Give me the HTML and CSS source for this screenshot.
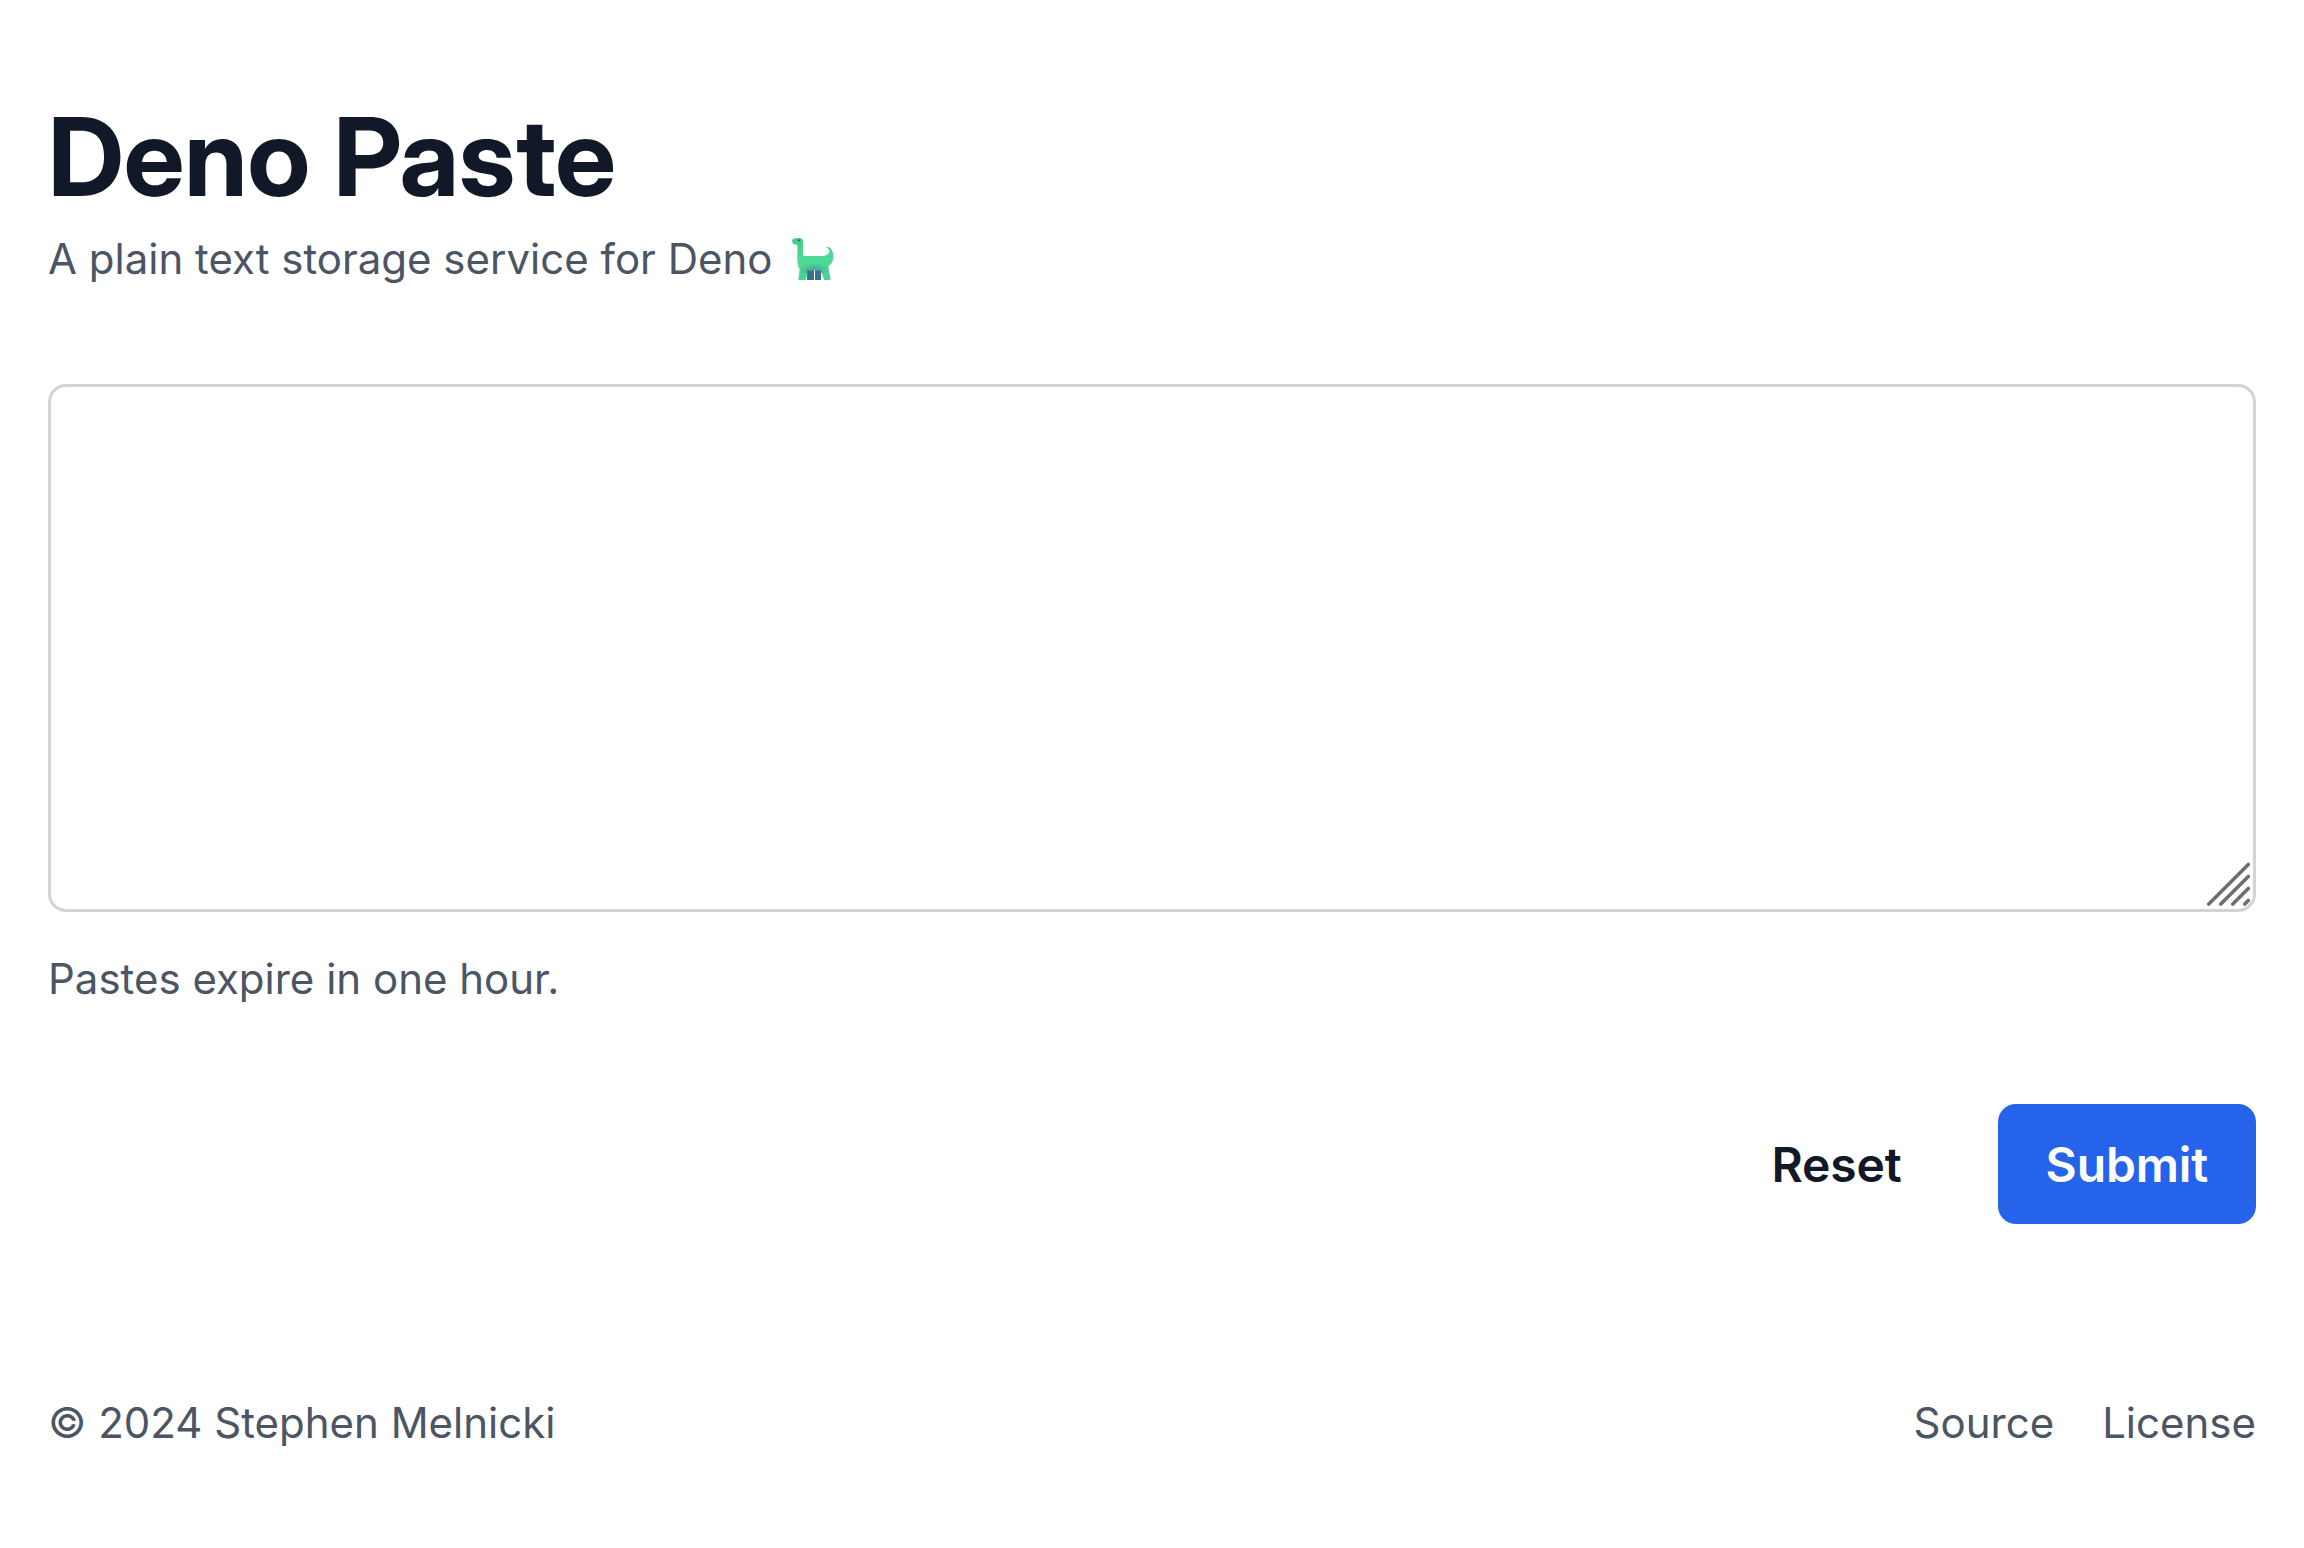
FILE: index.html
```html
<!DOCTYPE html>
<html lang="en">
<head>
<meta charset="utf-8">
<title>Deno Paste</title>
<link rel="stylesheet" href="styles.css">
</head>
<body>
<div class="page">
  <header class="header">
    <h1 class="title">Deno Paste</h1>
    <p class="text subtitle">A plain text storage service for Deno
      <svg class="dino" viewBox="18 18 162 162" aria-hidden="true">
        <defs>
          <linearGradient id="body" x1="0" y1="38" x2="0" y2="165" gradientUnits="userSpaceOnUse">
            <stop offset="0" stop-color="#42cd88"/>
            <stop offset=".5" stop-color="#4fdb95"/>
            <stop offset="1" stop-color="#4ad393"/>
          </linearGradient>
          <radialGradient id="belly" cx="0" cy="0" r="1" gradientTransform="translate(103 142) scale(50 32)" gradientUnits="userSpaceOnUse">
            <stop offset="0" stop-color="#4390a0" stop-opacity=".9"/>
            <stop offset=".4" stop-color="#439ba0" stop-opacity=".6"/>
            <stop offset="1" stop-color="#48c090" stop-opacity="0"/>
          </radialGradient>
        </defs>
        <path fill="url(#body)" d="M36 47C37 40 46 38 57 39C65 39 69 44 69 51V93H128C142 92 149 85 148 78C147 71 143 68 138 68C141 64 151 67 156 76C165 93 160 115 145 124L152 165H132L122 136H86L77 165H55L59 133C54 125 52 115 52 102V59C43 60 36 55 36 47Z"/>
        <path fill="url(#belly)" d="M60 93H145V124L148 145H125L122 136H86L83 145H58Z"/>
        <path fill="#3b7186" d="M82 136h20v29H81zM105 136h18v29h-18z"/>
        <ellipse cx="57" cy="46" rx="4" ry="2.8" fill="#315e50"/>
      </svg>
    </p>
  </header>
  <form class="form">
    <div class="field">
      <textarea class="input" aria-label="Paste"></textarea>
      <svg class="grip" viewBox="0 0 44 44" aria-hidden="true">
        <path d="M2.8 42 42.3 2.5M14.8 42 42.3 14.5M26.8 42 42.3 26.5M38.8 42 42.3 38.5"/>
      </svg>
    </div>
    <p class="text hint">Pastes expire in one hour.</p>
    <div class="actions">
      <button class="button" type="reset">Reset</button>
      <button class="button primary" type="button">Submit</button>
    </div>
  </form>
  <footer class="text footer">
    <span>© 2024 Stephen Melnicki</span>
    <nav class="links"><a class="link" href="#">Source</a><a class="link" href="#">License</a></nav>
  </footer>
</div>
</body>
</html>
```
FILE: styles.css
```css
* { box-sizing: border-box; }
body { margin: 0; background: #fff; color: #111827; font-family: Inter, sans-serif; }
.page { padding: 96px 48px; }
.title { margin: 0; font-family: "Inter Display", Inter, sans-serif; font-size: 108px; line-height: 122px; font-weight: 700; }
.text { margin: 0; font-size: 42px; line-height: 62px; color: #4b5563; }
.subtitle { margin-top: 10px; display: flex; align-items: center; gap: 14px; }
.dino { width: 54px; height: 54px; margin-bottom: 2px; }
.form { margin-top: 94px; }
.field { position: relative; height: 528px; }
.input {
  display: block; width: 100%; height: 100%; padding: 24px 36px;
  border: 3px solid #d1d5db; border-radius: 18px; background: #fff;
  font: 48px/72px Inter, sans-serif; resize: none; outline: none;
}
.grip { position: absolute; right: 6px; bottom: 6px; width: 44px; height: 44px; }
.grip path { fill: none; stroke: #6e6e6e; stroke-width: 3.6; stroke-linecap: round; }
.hint { margin-top: 36px; }
.actions { margin-top: 94px; display: flex; justify-content: flex-end; gap: 48px; }
.button {
  border: 0; padding: 25px 48px 23px; border-radius: 18px; background: transparent;
  font: 600 48px/72px Inter, sans-serif; letter-spacing: -0.15px; color: #111827;
}
.primary { background: #2563eb; color: #fff; }
.footer { margin-top: 168px; display: flex; justify-content: space-between; }
.links { display: flex; gap: 48px; }
.link { color: inherit; text-decoration: none; }
```
